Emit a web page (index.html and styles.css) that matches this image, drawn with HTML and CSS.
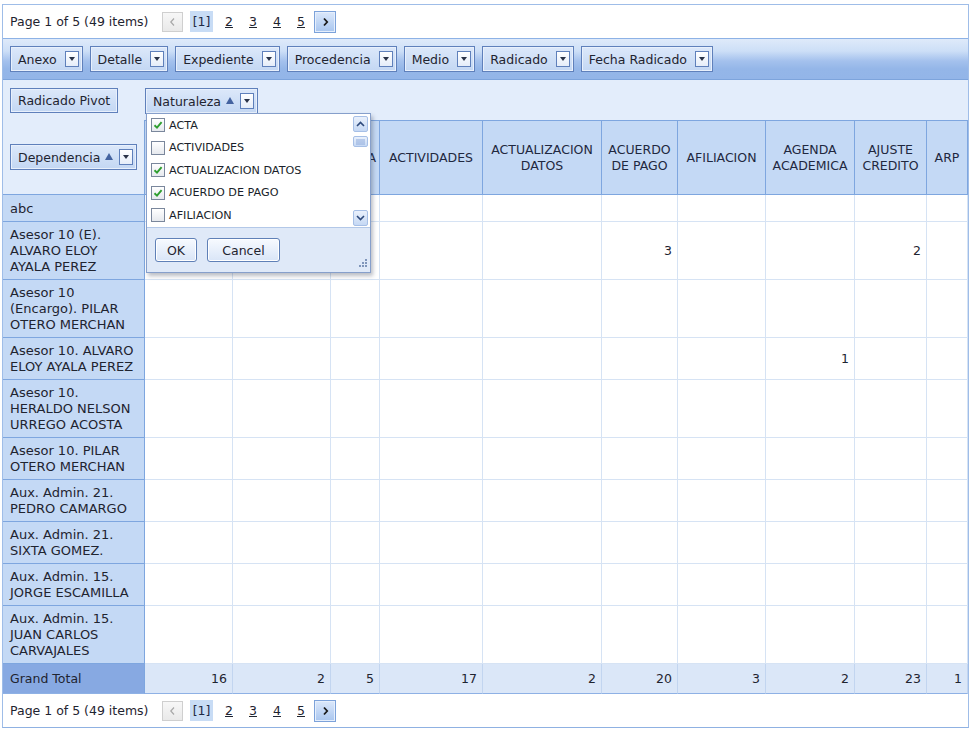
FILE: index.html
```html
<!DOCTYPE html>
<html lang="es">
<head>
<meta charset="utf-8">
<title>Radicado Pivot</title>
<link rel="stylesheet" href="styles.css">
</head>
<body>
<div class="pivot-grid">
  <div class="pager">
    <span class="pager-summary">Page 1 of 5 (49 items)</span>
    <span class="pg-btn pg-prev"><svg width="7" height="10" viewBox="0 0 7 10"><path d="M5 1.5 L1.8 5 L5 8.5" fill="none" stroke="#a8a8a8" stroke-width="1.2"/></svg></span>
    <span class="pg-current">[1]</span>
    <a class="pg-link">2</a>
    <a class="pg-link">3</a>
    <a class="pg-link">4</a>
    <a class="pg-link">5</a>
    <span class="pg-btn pg-next"><svg width="7" height="10" viewBox="0 0 7 10"><path d="M2 1.5 L5.2 5 L2 8.5" fill="none" stroke="#1a1a1a" stroke-width="1.8"/></svg></span>
  </div>

  <div class="filter-area">
    <span class="field"><span class="label">Anexo</span><span class="dd"></span></span>
    <span class="field"><span class="label">Detalle</span><span class="dd"></span></span>
    <span class="field"><span class="label">Expediente</span><span class="dd"></span></span>
    <span class="field"><span class="label">Procedencia</span><span class="dd"></span></span>
    <span class="field"><span class="label">Medio</span><span class="dd"></span></span>
    <span class="field"><span class="label">Radicado</span><span class="dd"></span></span>
    <span class="field"><span class="label">Fecha Radicado</span><span class="dd"></span></span>
  </div>

  <div class="pivot">
    <div class="corner"><span class="field plain">Radicado Pivot</span></div>
    <div class="colfields"><span class="field active"><span class="label">Naturaleza</span><span class="sort"></span><span class="dd"></span></span></div>

    <div class="rowfields"><span class="field"><span class="label">Dependencia</span><span class="sort"></span><span class="dd"></span></span></div>
    <div class="ch"></div>
    <div class="ch"></div>
    <div class="ch ch-end">ACTA</div>
    <div class="ch">ACTIVIDADES</div>
    <div class="ch">ACTUALIZACION<br>DATOS</div>
    <div class="ch">ACUERDO<br>DE PAGO</div>
    <div class="ch">AFILIACION</div>
    <div class="ch">AGENDA<br>ACADEMICA</div>
    <div class="ch">AJUSTE<br>CREDITO</div>
    <div class="ch">ARP</div>

    <div class="rh single">abc</div>
    <div class="c"></div><div class="c"></div><div class="c"></div><div class="c"></div><div class="c"></div><div class="c"></div><div class="c"></div><div class="c"></div><div class="c"></div><div class="c"></div>

    <div class="rh">Asesor 10 (E).<br>ALVARO ELOY<br>AYALA PEREZ</div>
    <div class="c"></div><div class="c"></div><div class="c"></div><div class="c"></div><div class="c"></div><div class="c">3</div><div class="c"></div><div class="c"></div><div class="c">2</div><div class="c"></div>

    <div class="rh">Asesor 10<br>(Encargo). PILAR<br>OTERO MERCHAN</div>
    <div class="c"></div><div class="c"></div><div class="c"></div><div class="c"></div><div class="c"></div><div class="c"></div><div class="c"></div><div class="c"></div><div class="c"></div><div class="c"></div>

    <div class="rh">Asesor 10. ALVARO<br>ELOY AYALA PEREZ</div>
    <div class="c"></div><div class="c"></div><div class="c"></div><div class="c"></div><div class="c"></div><div class="c"></div><div class="c"></div><div class="c">1</div><div class="c"></div><div class="c"></div>

    <div class="rh">Asesor 10.<br>HERALDO NELSON<br>URREGO ACOSTA</div>
    <div class="c"></div><div class="c"></div><div class="c"></div><div class="c"></div><div class="c"></div><div class="c"></div><div class="c"></div><div class="c"></div><div class="c"></div><div class="c"></div>

    <div class="rh">Asesor 10. PILAR<br>OTERO MERCHAN</div>
    <div class="c"></div><div class="c"></div><div class="c"></div><div class="c"></div><div class="c"></div><div class="c"></div><div class="c"></div><div class="c"></div><div class="c"></div><div class="c"></div>

    <div class="rh">Aux. Admin. 21.<br>PEDRO CAMARGO</div>
    <div class="c"></div><div class="c"></div><div class="c"></div><div class="c"></div><div class="c"></div><div class="c"></div><div class="c"></div><div class="c"></div><div class="c"></div><div class="c"></div>

    <div class="rh">Aux. Admin. 21.<br>SIXTA GOMEZ.</div>
    <div class="c"></div><div class="c"></div><div class="c"></div><div class="c"></div><div class="c"></div><div class="c"></div><div class="c"></div><div class="c"></div><div class="c"></div><div class="c"></div>

    <div class="rh">Aux. Admin. 15.<br>JORGE ESCAMILLA</div>
    <div class="c"></div><div class="c"></div><div class="c"></div><div class="c"></div><div class="c"></div><div class="c"></div><div class="c"></div><div class="c"></div><div class="c"></div><div class="c"></div>

    <div class="rh">Aux. Admin. 15.<br>JUAN CARLOS<br>CARVAJALES</div>
    <div class="c"></div><div class="c"></div><div class="c"></div><div class="c"></div><div class="c"></div><div class="c"></div><div class="c"></div><div class="c"></div><div class="c"></div><div class="c"></div>

    <div class="rh-total">Grand Total</div>
    <div class="ct">16</div><div class="ct">2</div><div class="ct">5</div><div class="ct">17</div><div class="ct">2</div><div class="ct">20</div><div class="ct">3</div><div class="ct">2</div><div class="ct">23</div><div class="ct">1</div>
  </div>

  <div class="pager">
    <span class="pager-summary">Page 1 of 5 (49 items)</span>
    <span class="pg-btn pg-prev"><svg width="7" height="10" viewBox="0 0 7 10"><path d="M5 1.5 L1.8 5 L5 8.5" fill="none" stroke="#a8a8a8" stroke-width="1.2"/></svg></span>
    <span class="pg-current">[1]</span>
    <a class="pg-link">2</a>
    <a class="pg-link">3</a>
    <a class="pg-link">4</a>
    <a class="pg-link">5</a>
    <span class="pg-btn pg-next"><svg width="7" height="10" viewBox="0 0 7 10"><path d="M2 1.5 L5.2 5 L2 8.5" fill="none" stroke="#1a1a1a" stroke-width="1.8"/></svg></span>
  </div>

  <div class="popup">
    <div class="popup-list">
      <div class="items">
        <div class="item"><span class="cb"><svg width="10" height="10" viewBox="0 0 10 10"><path d="M1.5 5.2 L4 7.6 L8.6 2.2" fill="none" stroke="#2f9e2f" stroke-width="1.9"/></svg></span>ACTA</div>
        <div class="item"><span class="cb"></span>ACTIVIDADES</div>
        <div class="item"><span class="cb"><svg width="10" height="10" viewBox="0 0 10 10"><path d="M1.5 5.2 L4 7.6 L8.6 2.2" fill="none" stroke="#2f9e2f" stroke-width="1.9"/></svg></span>ACTUALIZACION DATOS</div>
        <div class="item"><span class="cb"><svg width="10" height="10" viewBox="0 0 10 10"><path d="M1.5 5.2 L4 7.6 L8.6 2.2" fill="none" stroke="#2f9e2f" stroke-width="1.9"/></svg></span>ACUERDO DE PAGO</div>
        <div class="item"><span class="cb"></span>AFILIACION</div>
      </div>
      <div class="scroll">
        <span class="sb-btn"><svg width="9" height="6" viewBox="0 0 9 6"><path d="M1 5 L4.5 1.5 L8 5" fill="none" stroke="#2e4a7c" stroke-width="1.6"/></svg></span>
        <span class="sb-thumb"><svg width="9" height="6" viewBox="0 0 9 6"><path d="M0 1 H9 M0 3 H9 M0 5 H9" stroke="#8eaadb" stroke-width="1"/></svg></span>
        <span class="sb-space"></span>
        <span class="sb-btn"><svg width="9" height="6" viewBox="0 0 9 6"><path d="M1 1 L4.5 4.5 L8 1" fill="none" stroke="#2e4a7c" stroke-width="1.6"/></svg></span>
      </div>
    </div>
    <div class="popup-foot">
      <span class="pbtn ok">OK</span>
      <span class="pbtn cancel">Cancel</span>
      <svg class="grip" width="10" height="10" viewBox="0 0 10 10"><path d="M8 1h2v2h-2zM5 4h2v2h-2zM8 4h2v2h-2zM2 7h2v2h-2zM5 7h2v2h-2zM8 7h2v2h-2z" fill="#7f95ba"/></svg>
    </div>
  </div>
</div>
</body>
</html>
```

FILE: styles.css
```css
* { box-sizing: border-box; }
html, body { margin: 0; padding: 0; background: #fff; }
body {
  font-family: "DejaVu Sans", Verdana, sans-serif;
  font-size: 12.5px;
  color: #1f2430;
}

.pivot-grid {
  position: relative;
  margin: 4px 0 0 2px;
  width: 967px;
  border: 1px solid #9fbde8;
  border-bottom-color: #8fb1e2;
  box-shadow: 0 2px 1px -1px #b5b9bf;
}

/* pager */
.pager {
  display: flex;
  align-items: center;
  height: 33px;
  padding-left: 7px;
  background: #fff;
}
.pager-summary {
  width: 142px;
  margin-right: 10px;
  white-space: nowrap;
}
.pg-btn {
  display: flex;
  align-items: center;
  justify-content: center;
}
.pg-prev {
  width: 21px;
  height: 20px;
  margin-right: 7px;
  border: 1px solid #cfcfcf;
  background: linear-gradient(#f7f7f7, #e9e9e9);
}
.pg-current {
  width: 23px;
  height: 21px;
  margin-right: 4px;
  display: flex;
  align-items: center;
  justify-content: center;
  background: #c8dcf5;
  color: #1f2a44;
}
.pg-link {
  width: 24px;
  text-align: center;
  text-decoration: underline;
  color: #1f2430;
}
.pg-next {
  width: 22px;
  height: 22px;
  margin-left: 1px;
  border: 1px solid #7ca2da;
  background: linear-gradient(#dbe8fb, #a9c6ef);
  box-shadow: inset 0 0 0 1px #e6effc;
}

/* filter bar */
.filter-area {
  display: flex;
  gap: 7px;
  height: 42px;
  padding: 7px 7px;
  border-top: 1px solid #8db2e6;
  border-bottom: 1px solid #7da4dc;
  background: linear-gradient(#dfeafa 0%, #cddff7 30%, #a4c1ed 55%, #94b6e8 75%, #93b5e8 100%);
}

.field {
  display: inline-flex;
  align-items: center;
  height: 26px;
  padding: 0 3px 0 7px;
  border: 1px solid #5f80bb;
  background: linear-gradient(#dce8fa, #c3d7f3);
  box-shadow: inset 0 0 0 1px #e8f0fc;
  white-space: nowrap;
  color: #1f2430;
}
.field .label { margin-right: 8px; }
.field.plain { height: 25px; padding: 0 7px; }
.sort {
  width: 0;
  height: 0;
  border-left: 4px solid transparent;
  border-right: 4px solid transparent;
  border-bottom: 7px solid #4463a0;
  margin: -1px 6px 0 -3px;
}
.dd {
  display: flex;
  align-items: center;
  justify-content: center;
  width: 14px;
  height: 16px;
  border: 1px solid #5f80bb;
  background: linear-gradient(#ffffff, #e5edf9);
}
.dd::after {
  content: "";
  width: 0;
  height: 0;
  border-left: 3.5px solid transparent;
  border-right: 3.5px solid transparent;
  border-top: 4px solid #2a3348;
}

/* pivot grid */
.pivot {
  display: grid;
  grid-template-columns: 142px 88px 98px 49px 103px 119px 76px 88px 89px 72px 41px;
}
.corner {
  height: 40px;
  padding: 8px 0 0 7px;
  background: #e3edfb;
}
.colfields {
  grid-column: 2 / -1;
  height: 40px;
  padding-top: 8px;
  background: #e3edfb;
}
.rowfields {
  height: 75px;
  display: flex;
  align-items: center;
  padding-left: 7px;
  background: #e3edfb;
  border-right: 1px solid #7ea6df;
  border-bottom: 1px solid #7ea6df;
}
.ch {
  height: 75px;
  display: flex;
  align-items: center;
  justify-content: center;
  text-align: center;
  line-height: 16px;
  color: #1f2840;
  background: #c4d9f5;
  border-top: 1px solid #7ea6df;
  border-right: 1px solid #7ea6df;
  border-bottom: 1px solid #7ea6df;
  overflow: hidden;
}
.ch-end {
  justify-content: flex-end;
  padding-right: 3px;
}
.rh {
  padding: 5px 2px 4px 7px;
  font-size: 13px;
  line-height: 16px;
  background: #c4d9f5;
  border-right: 1px solid #7ea6df;
  border-bottom: 1px solid #7ea6df;
  white-space: nowrap;
}
.rh.single { padding-top: 6px; padding-bottom: 4px; }
.c {
  display: flex;
  align-items: center;
  justify-content: flex-end;
  padding-right: 5px;
  background: #fff;
  border-right: 1px solid #d6e3f4;
  border-bottom: 1px solid #d6e3f4;
}
.rh-total {
  padding: 7px 7px 6px;
  line-height: 16px;
  background: #87a9e2;
  border-right: 1px solid #7ea6df;
  border-bottom: 1px solid #8eb1e5;
}
.ct {
  display: flex;
  align-items: center;
  justify-content: flex-end;
  padding-right: 5px;
  background: #dbe7f8;
  border-right: 1px solid #c2d5f0;
  border-bottom: 1px solid #8eb1e5;
}

/* filter popup */
.popup {
  position: absolute;
  left: 143px;
  top: 108px;
  width: 225px;
  height: 160px;
  display: flex;
  flex-direction: column;
  background: #fff;
  border: 1px solid #869fcb;
  box-shadow: 2px 3px 4px rgba(60, 70, 90, 0.35);
}
.popup-list {
  height: 113px;
  display: flex;
}
.items {
  flex: 1;
  padding-left: 4px;
}
.item {
  height: 22.5px;
  display: flex;
  align-items: center;
  gap: 4px;
  font-size: 11.2px;
  color: #1a1f2b;
  white-space: nowrap;
}
.cb {
  width: 14px;
  height: 14px;
  display: flex;
  align-items: center;
  justify-content: center;
  border: 1px solid #7a879c;
  background: linear-gradient(#ffffff, #e6e9ee);
}
.scroll {
  width: 18px;
  display: flex;
  flex-direction: column;
  padding: 2px 2px 1px 1px;
}
.sb-btn, .sb-thumb {
  display: flex;
  align-items: center;
  justify-content: center;
  border: 1px solid #a6bfe6;
  border-radius: 2px;
  background: linear-gradient(#eaf1fc, #c5d8f4);
}
.sb-btn { height: 16px; }
.sb-thumb { height: 11px; margin-top: 4px; }
.sb-space { flex: 1; }
.popup-foot {
  position: relative;
  flex: 1;
  display: flex;
  align-items: flex-start;
  gap: 10px;
  padding: 10px 0 0 8px;
  background: #dfe9f8;
  border-top: 1px solid #b3c8e8;
}
.pbtn {
  height: 24px;
  display: flex;
  align-items: center;
  justify-content: center;
  border: 1px solid #5f80b7;
  border-radius: 3px;
  background: linear-gradient(#f7faff, #d9e5f7);
  box-shadow: inset 0 0 0 1px #ffffff;
  color: #1f2430;
}
.ok { width: 42px; }
.cancel { width: 73px; }
.grip {
  position: absolute;
  right: 3px;
  bottom: 4px;
}
```
